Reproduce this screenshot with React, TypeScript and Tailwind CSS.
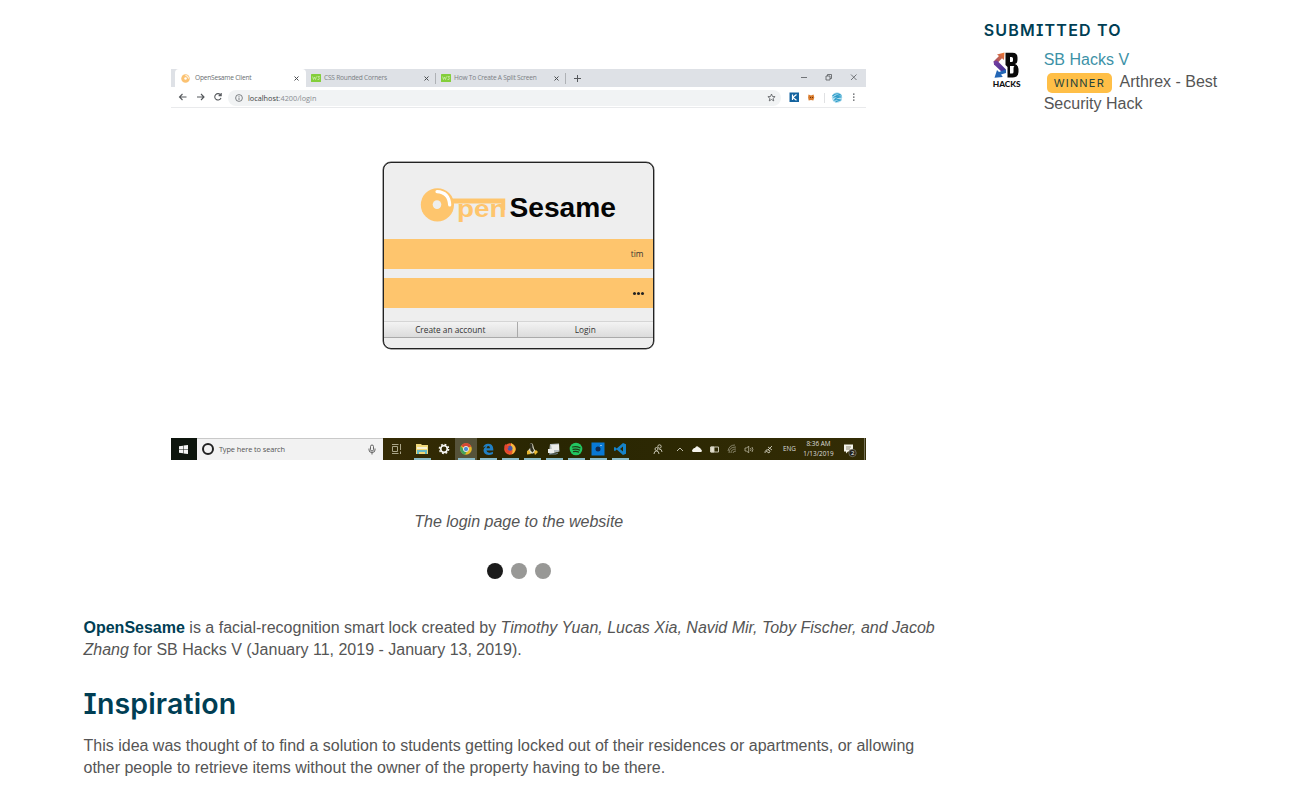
import type { ReactNode } from "react";

const ui = "font-['Open_Sans','Noto_Sans',sans-serif]";

function Cross() {
  return (
    <svg className="size-[5px] shrink-0" viewBox="0 0 10 10" stroke="#4a4d51" strokeWidth="2">
      <path d="M1 1 9 9M9 1 1 9" />
    </svg>
  );
}

function SiteIcon() {
  return (
    <svg className="h-2 w-[10px] shrink-0" viewBox="0 0 20 16">
      <rect width="20" height="16" rx="1" fill="#83ce3b" />
      <path d="M3 5l2 6 2-5 2 5 2-6M13 5h4l-2 3q3 0 1 3h-3" fill="none" stroke="#d9f3bd" strokeWidth="1.3" />
    </svg>
  );
}

function TabStrip() {
  return (
    <div className="flex h-[18px] bg-[#dee1e6] text-[6.6px] tracking-[-0.22px] text-[#7b7f84]">
      <div className="ml-1 flex w-[131px] items-center rounded-t-[4px] bg-white pr-[7px] pl-[6px]">
        <svg className="mr-[5px] size-[9px] shrink-0" viewBox="0 0 18 18">
          <circle cx="9" cy="9" r="8.5" fill="#fbc272" />
          <circle cx="9" cy="9" r="2.5" fill="#fff" />
          <path d="M9 3q6 0 6 6" fill="none" stroke="#fff" strokeWidth="2" />
        </svg>
        <span className="grow whitespace-nowrap text-[#696d71]">OpenSesame Client</span>
        <Cross />
      </div>
      <div className="flex w-[129px] items-center pr-[6px] pl-[5px]">
        <SiteIcon />
        <span className="ml-[3px] grow whitespace-nowrap">CSS Rounded Corners</span>
        <Cross />
      </div>
      <div className="flex w-[131px] items-center border-l border-transparent pr-[7px] pl-[5px]">
        <div className="-ml-[6px] mr-[5px] h-[11px] w-px bg-[#aeb1b5]" />
        <SiteIcon />
        <span className="ml-[3px] grow whitespace-nowrap">How To Create A Split Screen</span>
        <Cross />
      </div>
      <div className="-ml-px flex items-center">
        <div className="h-[11px] w-px bg-[#aeb1b5]" />
        <svg className="ml-[8px] size-[7px]" viewBox="0 0 14 14" stroke="#55585c" strokeWidth="2">
          <path d="M7 0v14M0 7h14" />
        </svg>
      </div>
      <div className="ml-auto flex items-center">
        <svg className="h-4 w-[75px]" viewBox="0 0 75 16" fill="none" stroke="#55585c" strokeWidth=".8">
          <path d="M10 7.500h6M60 4.500l5.500 5.500M65.500 4.500 60 10M35 6h4v4h-4zM36.500 6V4.500h4v4H39" />
        </svg>
      </div>
    </div>
  );
}

function Toolbar() {
  return (
    <div className="flex h-[21px] items-center border-b border-[#e9eaec] bg-white">
      <svg className="h-5 w-[57px] shrink-0" viewBox="0 0 57 20" fill="none" stroke="#55585c" strokeWidth="1.1">
        <path d="M15.500 10H8.500M11.500 7l-3 3 3 3M26 10h7M30 7l3 3-3 3M49.700 8.200a3.200 3.200 0 1 0 .3 2.600M50.200 6v2.600h-2.600" />
      </svg>
      <div className="mt-[1px] flex h-[16px] w-[553px] shrink-0 items-center rounded-full bg-[#f1f3f4] pr-[5px] pl-[7px]">
        <svg className="size-2" viewBox="0 0 16 16" fill="none" stroke="#5a5d61" strokeWidth="1.5">
          <circle cx="8" cy="8" r="6.800" />
          <path d="M8 7v5M8 4v1.600" />
        </svg>
        <span className="ml-[5px] grow text-[7.300px] text-[#888c90]">
          <span className="text-[#3c3f43]">localhost</span>:4200/login
        </span>
        <svg className="size-[9px]" viewBox="0 0 18 18" fill="none" stroke="#55585c" strokeWidth="1.600">
          <path d="M9 2l2 5 5.200.3-4 3.400 1.300 5.100L9 13l-4.500 2.800 1.300-5.100-4-3.400L7 7z" />
        </svg>
      </div>
      <svg className="ml-[2px] h-5 w-[80px] shrink-0" viewBox="783 87 80 20">
        <rect x="789.500" y="92.500" width="9.500" height="9.500" fill="#14639f" />
        <path d="M792.500 94.500V100M796.500 94.500l-3.700 3 3.700 2.700" stroke="#fff" strokeWidth="1.200" fill="none" />
        <path d="M808.500 94.500l2.500 1 2.500-1 .8 3-1 3-2.300-.5-2.300.5-.6-3z" fill="#d97b2c" />
        <path d="M810 97.500h1m1 0h1" stroke="#6b3711" />
        <path d="M824.500 93v10" stroke="#e0e1e3" />
        <circle cx="837" cy="97.500" r="5.200" fill="#b5e0f0" />
        <path d="M832.500 96q4-4 8-1-4 0-6 2 4-1 7 0-5 0-7 3 4-1 6 0-3 1-5 2" fill="none" stroke="#2e9cc9" strokeWidth="1.100" />
        <path d="M853 93.500h1.500v1.300H853zM853 96.500h1.500v1.300H853zM853 99.500h1.500v1.300H853z" fill="#55585c" />
      </svg>
    </div>
  );
}

function Logo() {
  return (
    <svg className="h-[75px] w-[269px] shrink-0" viewBox="384 163 269 75">
      <path d="M450 198.500h55.200V210h-4v-6.500H450z" fill="#fec56d" />
      <circle cx="437.400" cy="204.800" r="16.600" fill="#fec56d" />
      <circle cx="437" cy="204.600" r="4.300" fill="#eee" />
      <path d="M437 191.600q12 .5 12.700 13.400" fill="none" stroke="#fff" strokeWidth="3.200" strokeLinecap="round" />
      <g fontFamily="Liberation Sans, Arial, sans-serif" fontWeight="700">
        <text x="457" y="217.300" fontSize="23.500" fill="#fec56d" textLength="49.500" lengthAdjust="spacingAndGlyphs">pen</text>
        <text x="509.500" y="216.500" fontSize="27.500" fill="#050505" textLength="106.500" lengthAdjust="spacingAndGlyphs">Sesame</text>
      </g>
    </svg>
  );
}

function LoginCard() {
  return (
    <div className="-ml-px flex h-[187px] w-[271px] flex-col overflow-hidden rounded-[8px] border border-[#222] bg-[#eee] text-[8.300px] text-[#333] ring-[0.5px] ring-[#555]">
      <Logo />
      <div className="mt-px flex h-[30px] items-center justify-end bg-[#fec56d] pr-[9px]">tim</div>
      <div className="mt-[9px] flex h-[30px] items-center justify-end gap-[1px] bg-[#fec56d] pr-[9px]">
        <i className="size-[3px] rounded-full bg-[#222]" />
        <i className="size-[3px] rounded-full bg-[#222]" />
        <i className="size-[3px] rounded-full bg-[#222]" />
      </div>
      <div className="mt-[13px] grid h-[17px] grid-cols-2 border-y border-t-[#d5d5d5] border-b-[#aaa] bg-linear-to-b from-[#f3f3f3] to-[#dcdcdc] text-center leading-4">
        <div className="border-r border-[#aaa]">Create an account</div>
        <div>Login</div>
      </div>
    </div>
  );
}

function AppIcon({ children, open = false, active = false }: { children: ReactNode; open?: boolean; active?: boolean }) {
  return (
    <div className={`flex h-full w-[22px] shrink-0 flex-col items-center justify-between ${active ? "bg-[#56533a]" : ""}`}>
      <svg className="mt-[3px] h-4 w-4" viewBox="0 0 16 16" fill="none">
        {children}
      </svg>
      <div className={`h-[2px] w-[17px] ${open ? "bg-[#8cbcc9]" : ""}`} />
    </div>
  );
}

function Taskbar() {
  return (
    <div className="flex h-[22px] bg-linear-to-r from-[#352b05] from-30% via-[#292602] via-55% to-[#332c05] text-[#ddd]">
      <div className="flex w-[26px] items-center justify-center bg-[#0d150d]">
        <svg className="size-[9px]" viewBox="0 0 18 18" fill="#f3f4f3">
          <path d="M0 2.500 8 1.400V8.500H0zM9 1.200 18 0v8.500H9zM0 9.500h8v7.100L0 15.500zM9 9.500h9V18L9 16.800z" />
        </svg>
      </div>
      <div className="flex w-[187px] items-center border-t border-[#c9c9c9] bg-[#f2f2f2] pr-[7px] pb-px pl-[5px] text-[7.400px] tracking-[-0.1px] text-[#555]">
        <div className="size-3 rounded-full border-2 border-[#222]" />
        <span className="ml-[5px] grow whitespace-nowrap">Type here to search</span>
        <svg className="h-[11px] w-2" viewBox="0 0 16 22" fill="none" stroke="#555" strokeWidth="1.800">
          <rect x="5" y="2" width="6" height="12" rx="3" />
          <path d="M2 9v3q0 5 6 5t6-5V9M8 17v4" />
        </svg>
      </div>
      <div className="w-[2px]" />
      <AppIcon>
        <path d="M4.500 5.500h5v5h-5zM4 3.500h6.500M4 12.500h6.500M12.500 3v6M12.500 10.500V13" stroke="#aaa588" />
      </AppIcon>
      <div className="w-[4px]" />
      <AppIcon open>
        <path d="M2 3h5l1 1h6v9H2z" fill="#efd779" />
        <path d="M3 6h10v2H3z" fill="#f7f2d7" />
        <path d="M3 9h10v4h-2v-2H5v2H3z" fill="#65b9c5" />
      </AppIcon>
      <AppIcon>
        <circle cx="8" cy="8" r="3.300" stroke="#f4f4f0" strokeWidth="1.700" />
        <circle cx="8" cy="8" r="4.600" stroke="#f4f4f0" strokeWidth="1.500" strokeDasharray="1.800 1.813" />
      </AppIcon>
      <AppIcon open active>
        <circle cx="8" cy="8" r="5.800" fill="#e5b928" />
        <path d="M3 5a5.800 5.800 0 0 1 10.300.5L8 7z" fill="#d54735" />
        <path d="M2.800 5.200A5.800 5.800 0 0 0 7 13.700L9 10 6 9z" fill="#44a35a" />
        <circle cx="8" cy="8" r="2.600" fill="#4b8bd4" stroke="#e8e4dc" />
      </AppIcon>
      <AppIcon open>
        <path d="M3 6.700q1.200-4 5-4 5 0 5.300 5.300v1.400H6.400q.3 2 2.800 2.300 2 0 3.700-1v2.300Q11 14 8.500 14 3.500 13.500 3.500 9q.3-2 2.700-3.400-3 .2-3.200 1.100zM6.500 7.200h3.600Q9.800 5 8.300 5t-1.800 2.200z" fill="#2180c4" fillRule="evenodd" />
      </AppIcon>
      <AppIcon open>
        <circle cx="8" cy="8" r="5.800" fill="#ec592c" />
        <path d="M9 2q5 3 4.500 7-.7 3-4 4.500Q12 9 9 7z" fill="#f5bd3c" />
        <circle cx="8" cy="7.300" r="2.500" fill="#4755a8" />
        <path d="M2.300 5Q3 3.500 4 3l1.200 2L7 6l-2 2q1 3 4 2.500Q7 13 4 11z" fill="#e54432" />
      </AppIcon>
      <AppIcon open>
        <path d="M6 2.500q2-1 3 1l1 4 2 3-3 2H6l-2-3 2.500-3z" fill="#dddac9" />
        <path d="M5.500 3Q7 1.500 8.300 3.500l.2 3 1.500 3-1.500 2-2-2L6 6z" fill="#30301f" />
        <path d="m3 10 2-1 2 4-4 .5zm7 1 2-2 2 2-3 3z" fill="#e9b832" />
      </AppIcon>
      <AppIcon open>
        <path d="m4 3 9-.500.5 8-4 1-6 2V7z" fill="#b6bec0" />
        <path d="m5 4 8-.500V9H6zM2 8h6v4H2z" fill="#ecedea" />
        <path d="M3 13h7l2-1" stroke="#778b99" />
      </AppIcon>
      <AppIcon open>
        <circle cx="8" cy="8" r="6.300" fill="#22c661" />
        <path d="M4.500 6q4-1 7.500.8M5 8.400q3.500-1 6.500.7M5.500 10.600q3-.7 5 .5" stroke="#203c17" strokeWidth="1.200" strokeLinecap="round" />
      </AppIcon>
      <AppIcon open>
        <path d="M1.500 1.500h13v13h-13z" fill="#0879d5" />
        <circle cx="8" cy="8" r="2.500" fill="#102b51" />
        <path d="M10.500 4h1v1h-1z" fill="#fff" />
      </AppIcon>
      <AppIcon open>
        <path d="m11 2 3 1.300v9.400L11 14l-6.300-5.400L3 10 2 9.500v-3L3 6l1.700 1.400zm0 3.600L8 8l3 2.400z" fill="#1683ca" fillRule="evenodd" />
      </AppIcon>
      <div className="flex grow items-center">
        <svg className="ml-[17px] h-[22px] w-[131px] shrink-0" viewBox="648 438 131 22" fill="none" stroke="#d4d1c0" strokeWidth=".9">
          <circle cx="656.500" cy="449" r="1.500" />
          <path d="M654 454q0-3 2.500-3t2.500 3" />
          <circle cx="659.500" cy="446.500" r="1.700" />
          <path d="M659 449q3 0 3 3M677 451l3-3 3 3" />
          <path d="M693 452q-2-1 0-3 1-1.500 2-1 1.500-3 4-.5 1.500 0 1.700 1.500 2 1 .8 3z" fill="#f5f4ec" stroke="none" />
          <path d="M710.500 447h8v5h-8z" />
          <path d="M711 447h3v5h-3z" fill="#e5e2d0" />
          <g stroke="#8f8b72">
            <path d="M729 453q0-6 7-6M731 453q0-4 5-4M733 453q0-2 3-2M728 451q1-6 7-6" />
          </g>
          <path d="M745 448h1.700l2-2v7l-2-2H745zM750.500 448q1 1.500 0 3M752 447q1.800 2.500 0 5" stroke="#aaa68d" />
          <path d="M765 453q0-4 4-3 2 1 0 3l-3-2M768 450l4-4m-4 1 4 3" />
        </svg>
        <span className="w-[21px] text-center text-[6.400px]">ENG</span>
        <div className="w-[37px] text-center text-[6.400px] leading-[10px]">
          <div className="whitespace-nowrap">8:36 AM</div>
          <div className="whitespace-nowrap">1/13/2019</div>
        </div>
        <svg className="h-[22px] w-[29px] shrink-0" viewBox="836 438 29 22">
          <path d="M843 444.500h9v7h-5l-2 2v-2h-2z" fill="#f4f3ea" />
          <path d="M845 447h5m-5 2h4" stroke="#615d42" strokeWidth=".7" />
          <circle cx="851.500" cy="453" r="3.700" fill="#25231c" stroke="#858371" strokeWidth=".7" />
          <text x="849.900" y="455.300" fontSize="6" fill="#fff" fontFamily="Open Sans, sans-serif">2</text>
          <path d="M863.500 438v22" stroke="#76725a" />
        </svg>
      </div>
    </div>
  );
}

function SBLogo() {
  return (
    <svg className="h-[36px] w-[30px]" viewBox="0 0 30 36">
      <defs>
        <linearGradient id="warm" x1="1" y1="0" x2="0" y2="1">
          <stop offset="0" stopColor="#f47a2c" />
          <stop offset="1" stopColor="#8b4577" />
        </linearGradient>
        <linearGradient id="cool" x1="0" y1="0" x2="1" y2="1">
          <stop offset="0" stopColor="#7c3fa0" />
          <stop offset="1" stopColor="#3a2f92" />
        </linearGradient>
      </defs>
      <path d="M1.500 9.500 7 4 5 2.500 12.500.5 12 8 10 6.200 4.500 12z" fill="url(#warm)" />
      <path d="m1.500 9.500 3.500-1 9 9-3 3.500-9-8.500z" fill="url(#cool)" />
      <path d="M14 17.500v3.500l-5 1.500 1.800 2.500-8.300.800L5 18l2 2 4-1.500z" fill="#2366b5" />
      <path d="M13.500.8h7q5 0 5 4.700v2.500q0 3-2.500 4Q26.500 13.500 26.500 17v3q0 5.500-6 5.500h-5V15l-2-2zM18 5v5h1.500q1.500 0 1.500-1.500v-2Q21 5 19.500 5zm0 9v7.500h2q1.500 0 1.500-1.500v-4.500Q23 14 21.500 14z" fill="#0a0a0a" fillRule="evenodd" />
      <text x=".7" y="34.500" fontFamily="Lato, sans-serif" fontWeight="900" fontSize="8" textLength="28" lengthAdjust="spacingAndGlyphs" fill="#111">HACKS</text>
    </svg>
  );
}

const heading = "font-[Inter,sans-serif] font-semibold [font-feature-settings:'cv08'] text-[#003e54]";

export default function App() {
  return (
    <div className="flex h-[805px] w-[1309px] overflow-hidden bg-white font-['Liberation_Sans',Arial,sans-serif] text-base leading-[22px] text-[#555]">
      <main className="ml-[83.500px] w-[869.500px] pt-[69px]">
        <figure className="flex flex-col">
          <div className={`ml-[87.500px] flex h-[391px] w-[695px] flex-col ${ui}`}>
            <TabStrip />
            <Toolbar />
            <div className="flex grow justify-center pt-[54px]">
              <LoginCard />
            </div>
            <Taskbar />
          </div>
          <figcaption className="mt-[51px] pl-px text-center italic">The login page to the website</figcaption>
        </figure>
        <div className="mt-[30px] ml-[0.5px] flex justify-center gap-2">
          <span className="size-4 rounded-full bg-[#1b1b1b]" />
          <span className="size-4 rounded-full bg-[#989896]" />
          <span className="size-4 rounded-full bg-[#989896]" />
        </div>
        <p className="mt-[38px] whitespace-nowrap">
          <strong className="text-[#003e54]">OpenSesame</strong> is a facial-recognition smart lock created by{" "}
          <em>
            Timothy Yuan, Lucas Xia, Navid Mir, Toby Fischer, and Jacob
            <br />
            Zhang
          </em>{" "}
          for SB Hacks V (January 11, 2019 - January 13, 2019).
        </p>
        <h2 className={`mt-[25px] text-[28.500px] leading-9 tracking-[0.15px] ${heading}`}>Inspiration</h2>
        <p className="mt-[13px] whitespace-nowrap">
          This idea was thought of to find a solution to students getting locked out of their residences or apartments, or allowing
          <br />
          other people to retrieve items without the owner of the property having to be there.
        </p>
      </main>
      <aside className="ml-[30.700px] w-[260px] pt-[19px]">
        <h3 className={`text-[16px] leading-[22px] tracking-[1.200px] ${heading}`}>SUBMITTED TO</h3>
        <div className="mt-[8px] flex">
          <div className="w-[60px] pt-[3px] pl-2">
            <SBLogo />
          </div>
          <div>
            <a className="block text-[#3d92a7]">SB Hacks V</a>
            <p className="w-[190px]">
              <span className="mr-[7.500px] ml-[3px] inline-block h-5 rounded-[5px] bg-[#ffbf47] px-[7px] align-middle font-[Inter,sans-serif] text-[11px] leading-5 tracking-[1.200px] text-[#24433c]">WINNER</span>
              Arthrex - Best Security Hack
            </p>
          </div>
        </div>
      </aside>
    </div>
  );
}
